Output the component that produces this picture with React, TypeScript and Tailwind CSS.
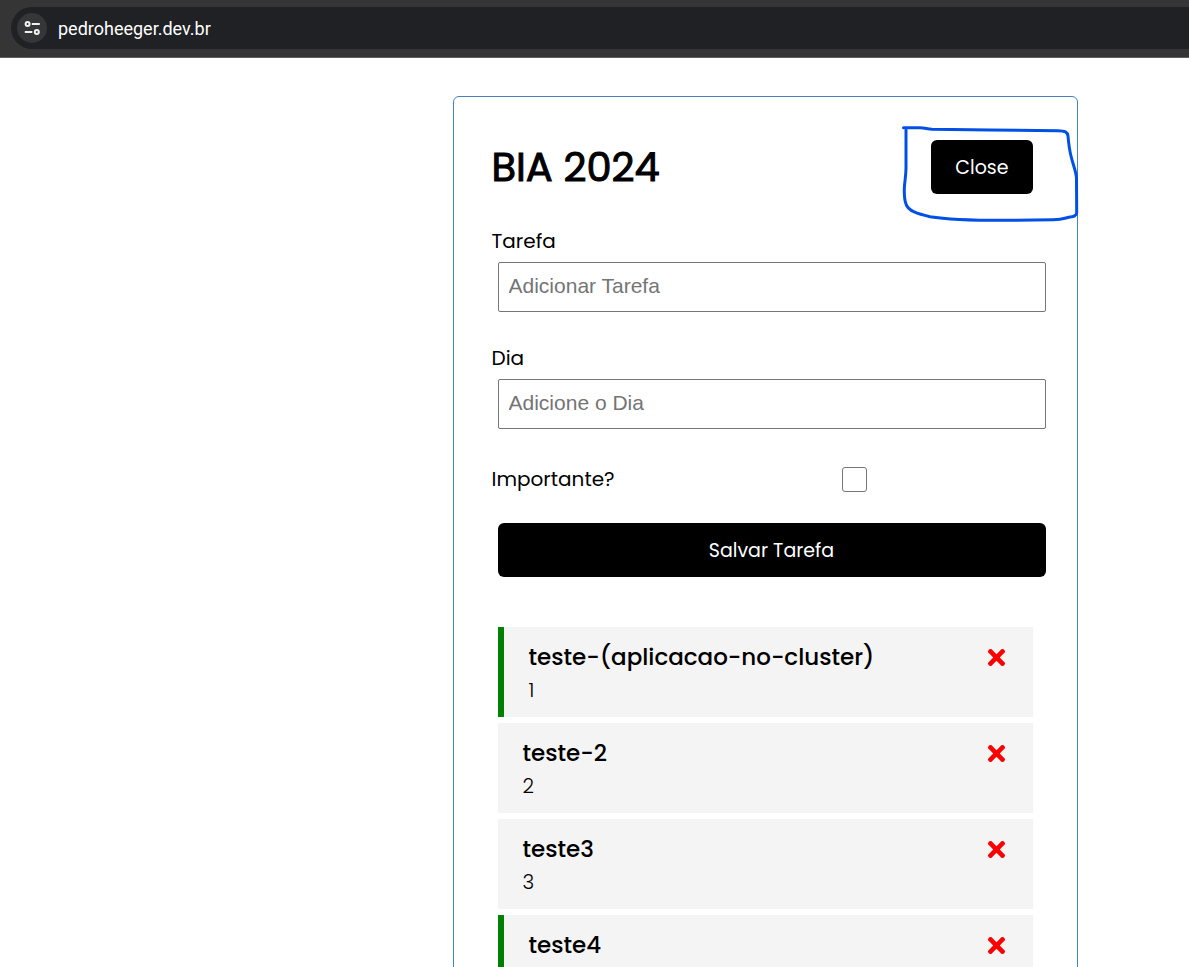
import { useState } from "react";
import { FaTimes } from "react-icons/fa";

type Task = { id: number; title: string; day?: string; important: boolean };

const initialTasks: Task[] = [
  { id: 1, title: "teste-(aplicacao-no-cluster)", day: "1", important: true },
  { id: 2, title: "teste-2", day: "2", important: false },
  { id: 3, title: "teste3", day: "3", important: false },
  { id: 4, title: "teste4", important: true },
];

function AddressBar() {
  return (
    <header className="shrink-0 border-b border-[#5f5f5f] bg-[#353535] pt-[7px] pb-2 pl-[11px]">
      <div className="flex h-[42px] items-center gap-[11px] rounded-l-full bg-[#202124] pl-[6px]">
        <button
          type="button"
          aria-label="Site information"
          className="flex size-[30px] items-center justify-center rounded-full bg-[#353638]"
        >
          <svg width="16" height="14" viewBox="0 0 16 14" fill="none" stroke="#f1f1f1" strokeWidth="2">
            <circle cx="3.6" cy="3" r="2" />
            <path d="M7.8 3H15.8M0.8 11H8.300" />
            <circle cx="12.800" cy="11" r="2" />
          </svg>
        </button>
        <span className="pt-[2px] font-[Roboto,'Open_Sans',sans-serif] text-[18px] leading-6 text-white">
          pedroheeger.dev.br
        </span>
      </div>
    </header>
  );
}

function PenMark() {
  return (
    <svg
      className="pointer-events-none absolute -top-[18px] -left-[31px] h-[100px] w-[180px] max-w-none"
      viewBox="0 0 180 100"
      fill="none"
      stroke="#0050e6"
      strokeWidth="3"
      strokeLinecap="round"
      strokeLinejoin="round"
      aria-hidden="true"
    >
      <path d="M3.500 5.700H20C25 5.700 27 7 32 7.200L90 8L158 8.700C165 8.800 167.500 10 168 14C168.500 20 169 26 171 34C173 43 176.500 50 176.500 57L176.700 91C176.500 95 171 94.500 166 96C161 97.500 157 97.700 153 97.700L112 98.300C80 98.500 50 98 30 94.700C18 92 8 89 6 82C4 77 4.300 72 4.300 67C4.500 60 6 54 6 46V8" />
    </svg>
  );
}

function TextField({ id, label, placeholder }: { id: string; label: string; placeholder: string }) {
  return (
    <div className="mb-[31px] flex flex-col gap-[6px]">
      <label htmlFor={id} className="text-[20px] leading-[30px]">
        {label}
      </label>
      <div className="flex pl-[6px]">
        <input
          id={id}
          type="text"
          placeholder={placeholder}
          className="h-[50px] w-full rounded-[2px] border border-[#767676] bg-white px-[10px] pb-[2px] font-['Liberation_Sans',Arial,sans-serif] text-[21px] placeholder:text-[#757575]"
        />
      </div>
    </div>
  );
}

function TaskRow({ task, onDelete }: { task: Task; onDelete: () => void }) {
  return (
    <li
      className={`flex min-h-[90px] items-start justify-between bg-[#f4f4f4] py-3 pr-6 pl-[25px] ${
        task.important ? "border-l-[6px] border-[#008000]" : ""
      }`}
    >
      <div>
        <h3 className="text-[23px] leading-9 font-medium">{task.title}</h3>
        {task.day && <p className="text-[20px] leading-[30px] font-light">{task.day}</p>}
      </div>
      <button type="button" aria-label={`Delete ${task.title}`} onClick={onDelete} className="flex h-9 items-center">
        <FaTimes size={25} color="red" />
      </button>
    </li>
  );
}

export default function App() {
  const [tasks, setTasks] = useState(initialTasks);

  return (
    <div className="flex h-screen flex-col overflow-hidden bg-white font-[Poppins,Inter,sans-serif] text-black">
      <AddressBar />
      <main className="flex justify-center pt-[38px] pl-[341px]">
        <section className="w-full max-w-[625px] rounded-[6px] border border-[#4682b4] pt-[43px] pr-[31px] pb-10 pl-[38px]">
          <div className="mb-8 flex items-center justify-between pr-[13px]">
            <h1 className="text-[40px] leading-[54px] font-normal [-webkit-text-stroke:1px_black]">BIA 2024</h1>
            <div className="relative">
              <button type="button" className="h-[54px] rounded-[6px] bg-black px-6 pt-[2px] text-[19px] text-white">
                Close
              </button>
              <PenMark />
            </div>
          </div>

          <form onSubmit={(e) => e.preventDefault()}>
            <TextField id="task" label="Tarefa" placeholder="Adicionar Tarefa" />
            <TextField id="day" label="Dia" placeholder="Adicione o Dia" />
            <div className="mb-[29px] flex items-center pt-1">
              <label htmlFor="important" className="w-[172px] text-[20px] leading-[30px]">
                Importante?
              </label>
              <div className="flex flex-1 justify-center">
                <input
                  id="important"
                  type="checkbox"
                  className="size-[25px] appearance-none rounded-[3px] border border-[#767676] bg-white checked:bg-[#0075ff]"
                />
              </div>
            </div>
            <div className="flex pl-[6px]">
              <button type="submit" className="h-[54px] w-full rounded-[6px] bg-black pt-[2px] text-[19px] text-white">
                Salvar Tarefa
              </button>
            </div>
          </form>

          <ul className="mt-[50px] flex flex-col gap-[6px] pr-[13px] pl-[6px]">
            {tasks.map((task) => (
              <TaskRow
                key={task.id}
                task={task}
                onDelete={() => setTasks(tasks.filter((t) => t.id !== task.id))}
              />
            ))}
          </ul>
        </section>
      </main>
    </div>
  );
}
